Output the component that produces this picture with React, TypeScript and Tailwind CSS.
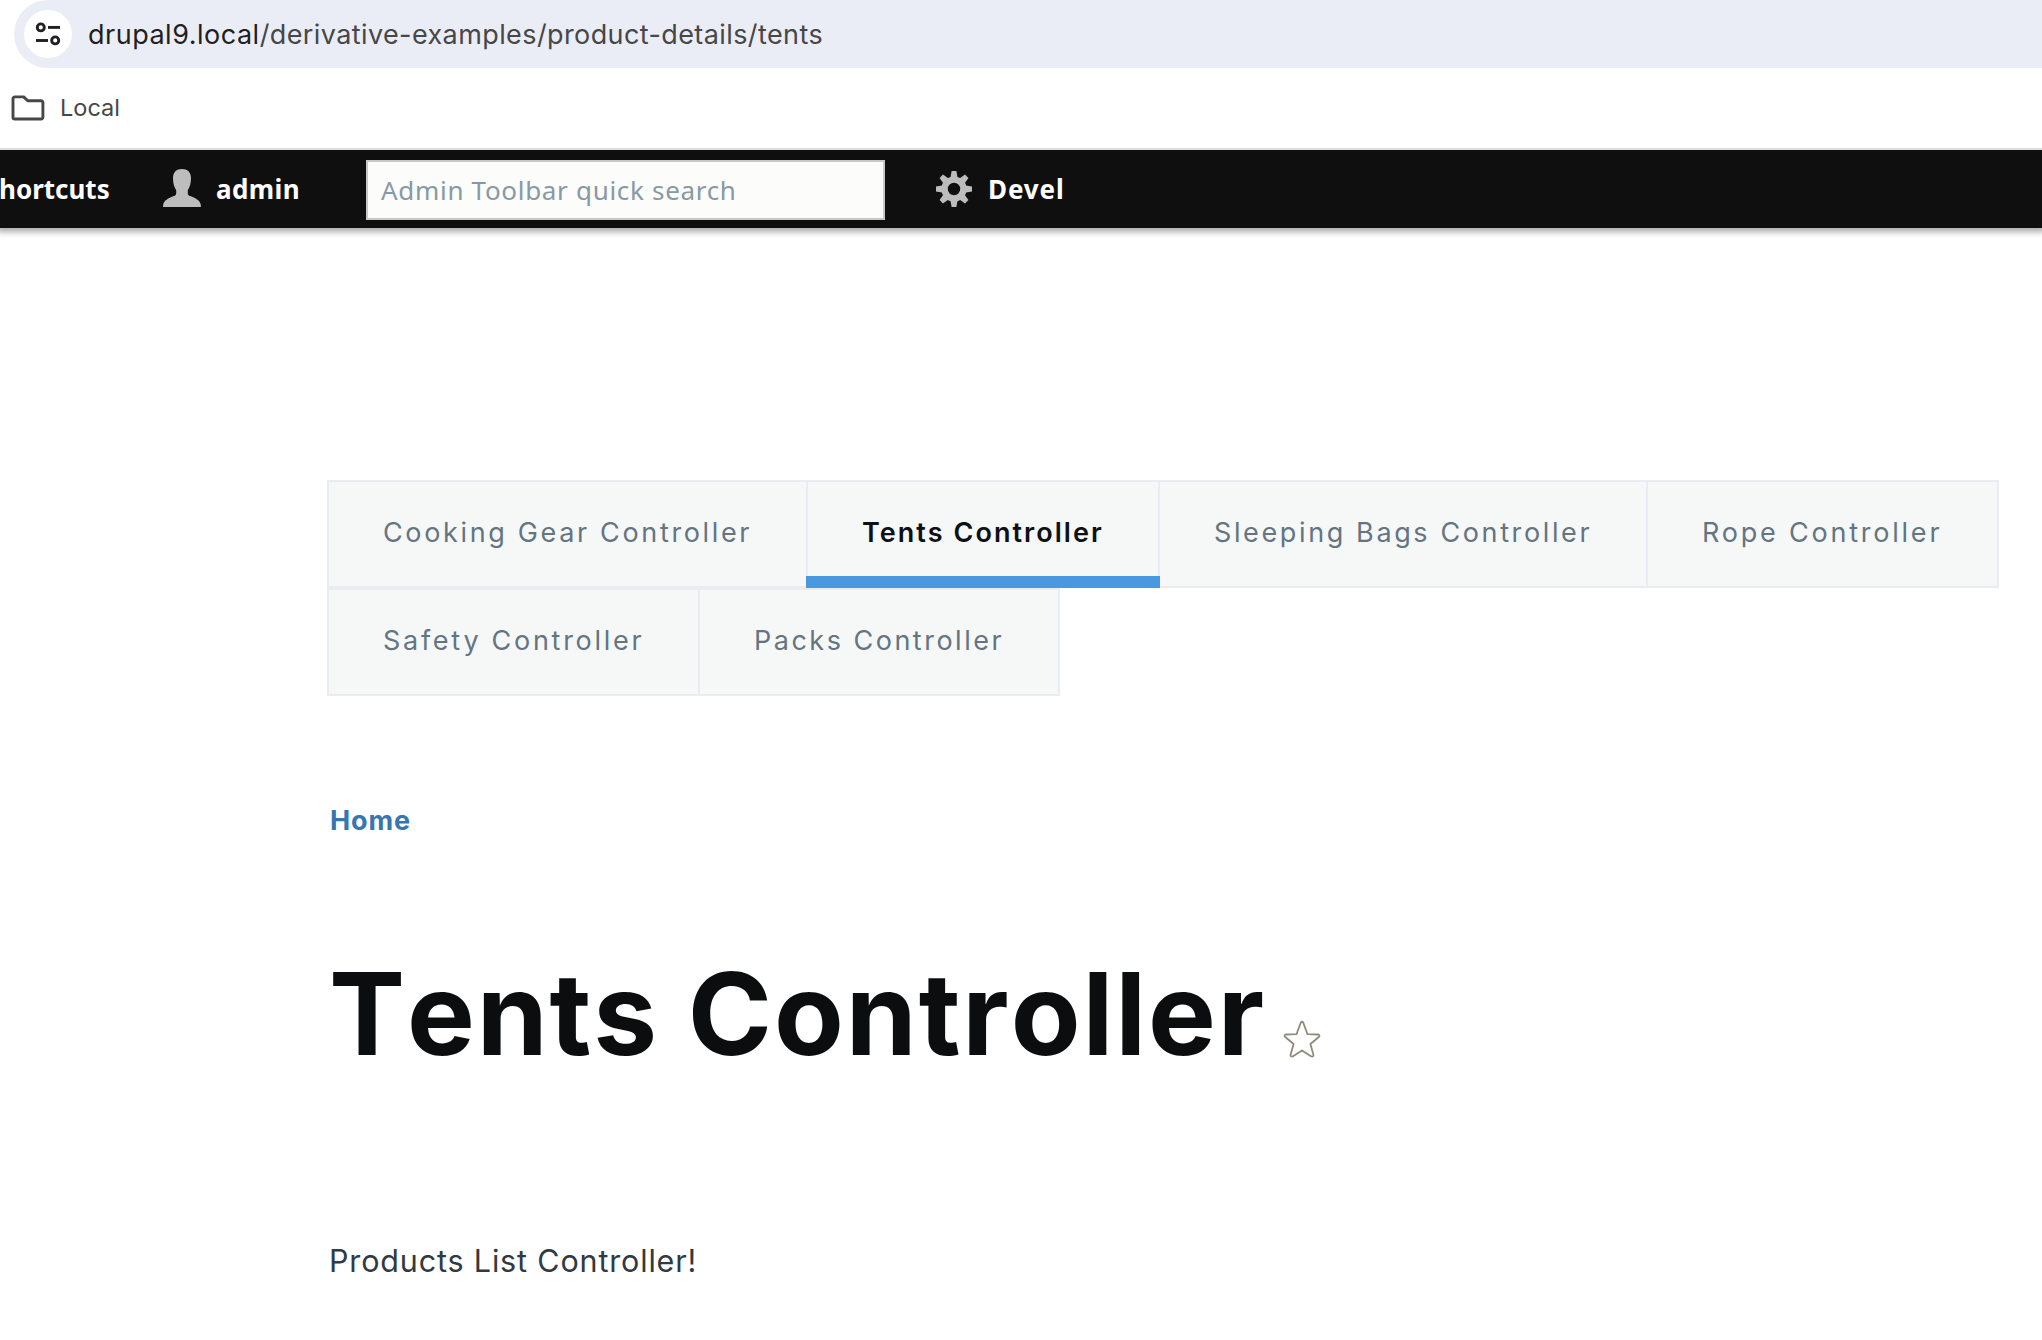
import React from "react";

type Tab = { label: string; className: string; active?: boolean };

const tabs: Tab[] = [
  { label: "Cooking Gear Controller", className: "w-[481px] tracking-[2.65px]" },
  { label: "Tents Controller", className: "w-[354px] tracking-[2.05px]", active: true },
  { label: "Sleeping Bags Controller", className: "w-[490px] tracking-[2.62px]" },
  { label: "Rope Controller", className: "w-[353px] tracking-[2.78px]" },
  { label: "Safety Controller", className: "w-[373px] tracking-[2.72px]" },
  { label: "Packs Controller", className: "w-[362px] tracking-[2.5px]" },
];

function SiteSettingsIcon() {
  return (
    <span className="flex h-12 w-12 shrink-0 items-center justify-center rounded-full bg-white">
      <svg width="26" height="24" viewBox="0 0 26 24" fill="none" stroke="#202124" strokeWidth="2.9">
        <circle cx="5.8" cy="5.4" r="3.5" />
        <path d="M13 5.4h12" />
        <path d="M1 18.5h12" />
        <circle cx="20.2" cy="18.4" r="3.5" />
      </svg>
    </span>
  );
}

function FolderIcon() {
  return (
    <svg className="shrink-0" width="34" height="26" viewBox="0 0 34 26" fill="none" stroke="#474747" strokeWidth="2.9" strokeLinejoin="round">
      <path d="M3.8 1.9h8.9l4 3.9h13.4a1.8 1.8 0 0 1 1.8 1.8v14.6a1.8 1.8 0 0 1-1.8 1.8H3.8A1.8 1.8 0 0 1 2 22.2V3.7a1.8 1.8 0 0 1 1.8-1.8z" />
    </svg>
  );
}

function UserIcon() {
  return (
    <svg className="mb-[2px] shrink-0" width="38" height="38" viewBox="0 0 38 38" fill="#bdbdbd">
      <path d="M19 0C24.6 0 28 3.2 28 9.2c0 5-1.2 9-3.2 12v3.2c0 1.2.8 2 2.4 2.7 5.400 2.200 10.300 4.200 10.800 9.900 0 .7-.4 1-1 1H1c-.6 0-1-.3-1-1 .5-5.700 5.400-7.700 10.800-9.900 1.600-.7 2.400-1.500 2.400-2.700v-3.200c-2-3-3.200-7-3.200-12C10 3.200 13.400 0 19 0z" />
    </svg>
  );
}

function GearIcon() {
  return (
    <svg className="shrink-0" width="36" height="36" viewBox="-18 -18 36 36" fill="#bdbdbd">
      <path
        fillRule="evenodd"
        d="M0-12.600a12.600 12.600 0 1 0 0 25.200a12.600 12.600 0 1 0 0-25.200zM0-6.200a6.200 6.200 0 1 1 0 12.400a6.200 6.200 0 1 1 0-12.400z"
      />
      {[0, 45, 90, 135, 180, 225, 270, 315].map((angle) => (
        <path key={angle} transform={`rotate(${angle})`} d="M-2.400-18h4.800l1.300 7.500h-7.400z" />
      ))}
    </svg>
  );
}

function StarIcon() {
  return (
    <svg width="38" height="38" viewBox="-1 -1 38 38" fill="none" stroke="#8f8b7b" strokeWidth="1.8" strokeLinejoin="round">
      <path d="M16.700 1.700Q18 -.2 19.300 1.700L23.500 13.200L34.500 13.500Q36.300 14.300 34.800 16L26.400 23L29.500 34Q29.400 36 27.400 35.500L18 29.400L8.600 35.500Q6.600 36 6.500 34L9.600 23L1.200 16Q-.3 14.300 1.500 13.500L12.500 13.200Z" />
    </svg>
  );
}

export default function App() {
  return (
    <div className="h-[1340px] w-[2042px] overflow-hidden bg-white font-['Inter',sans-serif]">
      <div className="pl-[14px]">
        <div className="flex h-[68px] items-center rounded-l-full bg-[#ebedf6] pl-[10px]">
          <SiteSettingsIcon />
          <span className="ml-4 whitespace-nowrap pt-[2px] text-[27px] leading-[66px] tracking-[0.4px] text-[#474747]">
            <span className="tracking-[0.5px] text-[#1f1f1f]">drupal9.local</span>/derivative-examples/product-details/tents
          </span>
        </div>
      </div>

      <div className="relative z-10 flex h-20 items-center bg-white pl-[11px] pb-px">
        <FolderIcon />
        <span className="ml-[15px] text-[23.5px] leading-8 text-[#474747]">Local</span>
      </div>

      <div className="flex h-20 items-center border-t-2 border-[#dedede] bg-[#0f0f0f] font-['Noto_Sans',sans-serif] text-[26px] font-bold leading-[36px] text-white shadow-[0_1px_6px_3px_rgba(0,0,0,0.33)]">
        <span className="-ml-px w-[164px]">hortcuts</span>
        <UserIcon />
        <span className="ml-[15px] w-[150px] tracking-[0.4px]">admin</span>
        <div className="mt-[2px] flex h-[60px] w-[519px] items-center border-2 border-[#c8c8c8] bg-[#fcfcfa] pl-[13px] font-normal tracking-[0.69px] text-[#8799a5]">
          Admin Toolbar quick search
        </div>
        <div className="ml-[51px]">
          <GearIcon />
        </div>
        <span className="ml-4 tracking-[0.9px]">Devel</span>
      </div>

      <main className="pl-[327px] pt-[252px]">
        <nav className="flex w-[1690px] flex-wrap">
          {tabs.map((tab) => (
            <div
              key={tab.label}
              className={`${tab.className} relative -mr-[2px] flex h-[108px] shrink-0 items-center border-2 border-[#e9ecf0] bg-[#f6f8f8] pb-[2px] pl-[54px] text-[27px] whitespace-nowrap ${
                tab.active ? "z-10 font-semibold text-[#0d1014]" : "text-[#647581]"
              }`}
            >
              {tab.label}
              {tab.active && <span className="absolute -inset-x-[2px] -bottom-[2px] h-3 bg-[#4a98df]" />}
            </div>
          ))}
        </nav>

        <a className="mt-[107px] ml-[3px] block text-[27px] font-bold leading-[36px] tracking-[0.88px] text-[#3776ae]">Home</a>

        <div className="mt-[115px] ml-[2px] flex">
          <h1 className="w-[954px] text-[114px] font-bold leading-[120px] tracking-[1.88px] whitespace-nowrap text-[#0c0d0f] [font-kerning:none]">
            Tents Controller
          </h1>
          <div className="mt-[66px]">
            <StarIcon />
          </div>
        </div>

        <p className="mt-[163px] ml-[2px] text-[30.5px] leading-[48px] tracking-[0.84px] text-[#303a42]">
          Products List Controller!
        </p>
      </main>
    </div>
  );
}
